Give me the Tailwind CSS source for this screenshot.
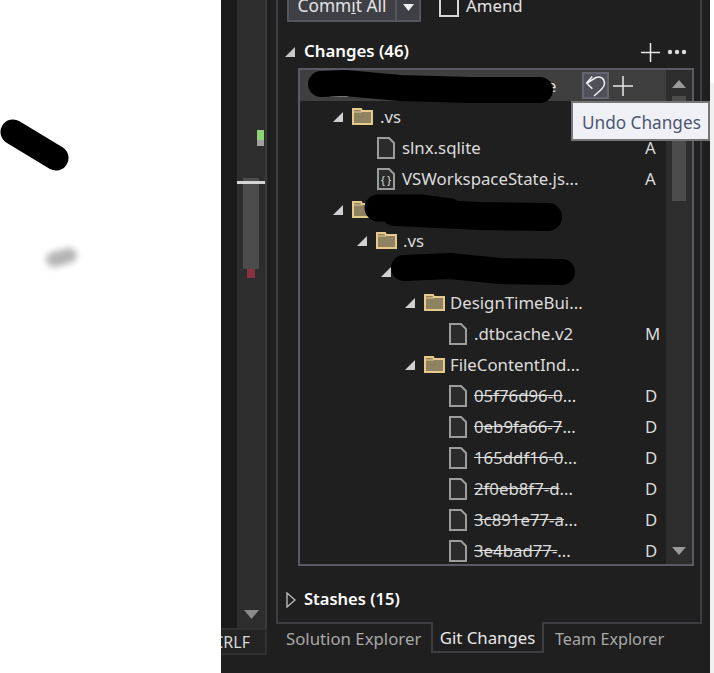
<!DOCTYPE html>
<html lang="en">
<head>
  <meta charset="UTF-8" />
  <title>Git Changes</title>
  <script src="https://cdn.jsdelivr.net/npm/@tailwindcss/browser@4"></script>
</head>
<body class="bg-white font-['Noto_Sans'] text-[16.8px] text-[#dcdcdc]">
  <div class="relative flex w-[714px] h-[673px] overflow-hidden">

    <!-- white area on the left, with the scribbles -->
    <div class="relative w-[221px] shrink-0 bg-white">
      <svg class="absolute left-0 top-0" width="221" height="300"><line x1="13" y1="132" x2="56" y2="158" stroke="#000" stroke-width="25" stroke-linecap="round"/></svg>
      <div class="absolute left-[46px] top-[250px] w-[31px] h-[15px] rounded-full bg-[#b4b4b4] blur-[3px] -rotate-[15deg]"></div>
    </div>

    <!-- editor margin and its scrollbar -->
    <div class="w-[55px] shrink-0 flex flex-col bg-[#1f1f1f]">
      <div class="flex h-[628px]">
        <div class="w-[16px] bg-[#1b1b1b]"></div>
        <div class="relative w-[28px] bg-[#2d2d2d]">
          <div class="absolute left-[20px] top-[130px] w-[7px] h-[10px] bg-[#8fd175]"></div>
          <div class="absolute left-[20px] top-[140px] w-[7px] h-[6px] bg-[#a0a0a0]"></div>
          <div class="absolute left-[6px] top-[178px] w-[16px] h-[91px] bg-[#4c4c4c]"></div>
          <div class="absolute left-0 top-[181px] w-[28px] h-[3px] bg-[#d4d4d4]"></div>
          <div class="absolute left-[10px] top-[269px] w-[8px] h-[9px] bg-[#8a3040]"></div>
          <svg class="absolute left-[7px] top-[610px]" width="15" height="9"><polygon points="0,0 15,0 7.5,9" fill="#8a8a8a"/></svg>
        </div>
        <div class="w-[2px] bg-[#3c3c3c]"></div>
      </div>
      <div class="flex justify-end items-center w-[46px] h-[27px] bg-[#232323] border-y-2 border-r-2 border-[#303030] overflow-hidden text-[16px] text-[#d8d8d8]">
        <span class="shrink-0 pr-[15px]">CRLF</span>
      </div>
    </div>

    <!-- git changes window -->
    <div class="relative w-[434px] shrink-0 bg-[#1f1f1f]">
      <div class="w-[426px] h-[624px] border-x-2 border-b-2 border-[#3e3e42] overflow-hidden">
        <div class="flex items-center -mt-[8px] ml-[9px] h-[30px]">
          <div class="flex h-[30px] border-2 border-[#55555c] bg-[#3f3f46]">
            <div class="w-[108px] flex items-center justify-center border-r-2 border-[#55555c] text-[17.3px] text-[#e4e4e4]"><span class="-mt-[2px]">Comm<u>i</u>t All</span></div>
            <div class="w-[22px] flex items-center justify-center"><svg width="11" height="7"><polygon points="0,0 11,0 5.5,7" fill="#f0f0f0"/></svg></div>
          </div>
          <div class="ml-[18px] -mt-[1px] w-[20px] h-[20px] border-2 border-[#d8d8d8]"></div>
          <div class="ml-[7px] -mt-[2px] text-[#e4e4e4]">Amend</div>
        </div>

        <div class="flex items-center h-[30px] mt-[15px] pl-[7px] relative">
          <svg class="mr-[9px]" width="10" height="10"><polygon points="10,0 10,10 0,10" fill="#c8c8c8"/></svg>
          <span class="-mt-[2px] font-semibold text-white">Changes (46)</span>
          <svg class="ml-auto mr-[7px]" width="19" height="19" viewBox="0 0 19 19"><path d="M9.500 0V19M0 9.500H19" stroke="#e8e8e8" stroke-width="1.5"/></svg>
          <svg class="mr-[13px]" width="20" height="6" viewBox="0 0 20 6"><circle cx="3" cy="3" r="2.2" fill="#dcdcdc"/><circle cx="10" cy="3" r="2.2" fill="#dcdcdc"/><circle cx="17" cy="3" r="2.2" fill="#dcdcdc"/></svg>
        </div>

        <!-- tree -->
        <div class="flex ml-[20px] mt-px w-[396px] h-[498px] border-2 border-[#5a5a64] overflow-hidden">
          <div class="w-[366px] shrink-0">
            <div class="flex items-center h-[31px] bg-[#3f3f3f]">
              <svg class="ml-[30px]" width="18" height="22" viewBox="0 0 18 22"><path d="M1 1H12L17 6V21H1Z" fill="#2b2b2b" stroke="#9c9c9c" stroke-width="2"/></svg>
              <span class="ml-[199px]">e</span>
              <div class="flex items-center justify-center ml-[26px] w-[27px] h-[27px] bg-[#50505a] border-2 border-[#65656f]">
                <svg width="23" height="23" viewBox="0 0 23 23" fill="none" stroke="#f0f0f0" stroke-width="1.5"><path d="M8.300 2.500L2.700 9L8.300 14.700"/><path d="M3 9L12 3.500C16 2 20.500 4 20.500 9.500C20.500 13 17 16 10 22"/></svg>
              </div>
              <svg class="ml-[4px]" width="20" height="20" viewBox="0 0 20 20"><path d="M10 0V20M0 10H20" stroke="#e8e8e8" stroke-width="1.5"/></svg>
            </div>

            <div class="flex items-center h-[31px] pl-[33px]">
              <svg class="mr-[9px]" width="10" height="10"><polygon points="10,0 10,10 0,10" fill="#d0d0d0"/></svg>
              <svg class="mr-[7px]" width="21" height="17" viewBox="0 0 21 17"><path d="M1 1H9L10 3H20V16H1Z" fill="#8f8260" stroke="#e6c98c" stroke-width="2"/><path d="M1 4H10" stroke="#e6c98c"/></svg>
              <span>.vs</span>
            </div>
            <div class="flex items-center h-[31px] pl-[77px]">
              <svg class="mr-[7px]" width="18" height="22" viewBox="0 0 18 22"><path d="M1 1H12L17 6V21H1Z" fill="#2b2b2b" stroke="#9c9c9c" stroke-width="2"/></svg>
              <span>slnx.sqlite</span><span class="ml-auto w-[21px]">A</span>
            </div>
            <div class="flex items-center h-[31px] pl-[77px]">
              <svg class="mr-[7px]" width="18" height="22" viewBox="0 0 18 22"><path d="M1 1H12L17 6V21H1Z" fill="#2b2b2b" stroke="#9c9c9c" stroke-width="2"/><text x="9" y="16" font-size="10" fill="#e0e0e0" text-anchor="middle">{ }</text></svg>
              <span>VSWorkspaceState.js...</span><span class="ml-auto w-[21px]">A</span>
            </div>
            <div class="flex items-center h-[31px] pl-[33px]">
              <svg class="mr-[9px]" width="10" height="10"><polygon points="10,0 10,10 0,10" fill="#d0d0d0"/></svg>
              <svg class="mr-[7px]" width="21" height="17" viewBox="0 0 21 17"><path d="M1 1H9L10 3H20V16H1Z" fill="#8f8260" stroke="#e6c98c" stroke-width="2"/><path d="M1 4H10" stroke="#e6c98c"/></svg>
            </div>
            <div class="flex items-center h-[31px] pl-[57px]">
              <svg class="mr-[9px]" width="10" height="10"><polygon points="10,0 10,10 0,10" fill="#d0d0d0"/></svg>
              <svg class="mr-[6px]" width="21" height="17" viewBox="0 0 21 17"><path d="M1 1H9L10 3H20V16H1Z" fill="#8f8260" stroke="#e6c98c" stroke-width="2"/><path d="M1 4H10" stroke="#e6c98c"/></svg>
              <span>.vs</span>
            </div>
            <div class="flex items-center h-[31px] pl-[81px]">
              <svg width="10" height="10"><polygon points="10,0 10,10 0,10" fill="#d0d0d0"/></svg>
            </div>
            <div class="flex items-center h-[31px] pl-[105px]">
              <svg class="mr-[9px]" width="10" height="10"><polygon points="10,0 10,10 0,10" fill="#d0d0d0"/></svg>
              <svg class="mr-[5px]" width="21" height="17" viewBox="0 0 21 17"><path d="M1 1H9L10 3H20V16H1Z" fill="#8f8260" stroke="#e6c98c" stroke-width="2"/><path d="M1 4H10" stroke="#e6c98c"/></svg>
              <span>DesignTimeBui...</span>
            </div>
            <div class="flex items-center h-[31px] pl-[149px]">
              <svg class="mr-[7px]" width="18" height="22" viewBox="0 0 18 22"><path d="M1 1H12L17 6V21H1Z" fill="#2b2b2b" stroke="#9c9c9c" stroke-width="2"/></svg>
              <span>.dtbcache.v2</span><span class="ml-auto w-[21px]">M</span>
            </div>
            <div class="flex items-center h-[31px] pl-[105px]">
              <svg class="mr-[9px]" width="10" height="10"><polygon points="10,0 10,10 0,10" fill="#d0d0d0"/></svg>
              <svg class="mr-[5px]" width="21" height="17" viewBox="0 0 21 17"><path d="M1 1H9L10 3H20V16H1Z" fill="#8f8260" stroke="#e6c98c" stroke-width="2"/><path d="M1 4H10" stroke="#e6c98c"/></svg>
              <span>FileContentInd...</span>
            </div>
            <div class="flex items-center h-[31px] pl-[149px]">
              <svg class="mr-[7px]" width="18" height="22" viewBox="0 0 18 22"><path d="M1 1H12L17 6V21H1Z" fill="#2b2b2b" stroke="#9c9c9c" stroke-width="2"/></svg>
              <span><span class="line-through">05f76d96-0</span>...</span><span class="ml-auto w-[21px]">D</span>
            </div>
            <div class="flex items-center h-[31px] pl-[149px]">
              <svg class="mr-[7px]" width="18" height="22" viewBox="0 0 18 22"><path d="M1 1H12L17 6V21H1Z" fill="#2b2b2b" stroke="#9c9c9c" stroke-width="2"/></svg>
              <span><span class="line-through">0eb9fa66-7</span>...</span><span class="ml-auto w-[21px]">D</span>
            </div>
            <div class="flex items-center h-[31px] pl-[149px]">
              <svg class="mr-[7px]" width="18" height="22" viewBox="0 0 18 22"><path d="M1 1H12L17 6V21H1Z" fill="#2b2b2b" stroke="#9c9c9c" stroke-width="2"/></svg>
              <span><span class="line-through">165ddf16-0</span>...</span><span class="ml-auto w-[21px]">D</span>
            </div>
            <div class="flex items-center h-[31px] pl-[149px]">
              <svg class="mr-[7px]" width="18" height="22" viewBox="0 0 18 22"><path d="M1 1H12L17 6V21H1Z" fill="#2b2b2b" stroke="#9c9c9c" stroke-width="2"/></svg>
              <span><span class="line-through">2f0eb8f7-d</span>...</span><span class="ml-auto w-[21px]">D</span>
            </div>
            <div class="flex items-center h-[31px] pl-[149px]">
              <svg class="mr-[7px]" width="18" height="22" viewBox="0 0 18 22"><path d="M1 1H12L17 6V21H1Z" fill="#2b2b2b" stroke="#9c9c9c" stroke-width="2"/></svg>
              <span><span class="line-through">3c891e77-a</span>...</span><span class="ml-auto w-[21px]">D</span>
            </div>
            <div class="flex items-center h-[31px] pl-[149px]">
              <svg class="mr-[7px]" width="18" height="22" viewBox="0 0 18 22"><path d="M1 1H12L17 6V21H1Z" fill="#2b2b2b" stroke="#9c9c9c" stroke-width="2"/></svg>
              <span><span class="line-through">3e4bad77-</span>...</span><span class="ml-auto w-[21px]">D</span>
            </div>
          </div>

          <!-- tree scrollbar -->
          <div class="relative w-[26px] bg-[#2d2d2d]">
            <svg class="absolute left-[6px] top-[10px]" width="14" height="8"><polygon points="0,8 14,8 7,0" fill="#9a9a9a"/></svg>
            <div class="absolute left-[6px] top-[26px] w-[14px] h-[105px] bg-[#4c4c4c]"></div>
            <svg class="absolute left-[6px] top-[477px]" width="14" height="8"><polygon points="0,0 14,0 7,8" fill="#9a9a9a"/></svg>
          </div>
        </div>

        <div class="flex items-center h-[30px] mt-[19px] pl-[8px]">
          <svg class="mr-[8px]" width="10" height="16" viewBox="0 0 10 16"><polygon points="1,1 9,8 1,15" fill="none" stroke="#b8b8b8" stroke-width="1.4"/></svg>
          <span class="-mt-[2px] font-semibold text-white text-[16.5px]">Stashes (15)</span>
        </div>
      </div>

      <!-- tabs -->
      <div class="flex h-[31px] -mt-[2px] pl-[10px] text-[#a8a8a8]">
        <div class="flex items-center w-[145px] pt-[3px] whitespace-nowrap">Solution Explorer</div>
        <div class="flex items-center justify-center w-[113px] pt-[3px] bg-[#1f1f1f] border-x-2 border-b-2 border-[#3e3e42] text-[#e8e8e8] whitespace-nowrap">Git Changes</div>
        <div class="flex items-center pl-[11px] pt-[3px] text-[16.2px] whitespace-nowrap">Team Explorer</div>
      </div>
    </div>

    <div class="flex-1 mt-[83px] bg-[#f0f0f0]"></div>

    <!-- redaction marks -->
    <svg class="absolute left-0 top-0 pointer-events-none" width="714" height="300" fill="none" stroke="#000" stroke-linecap="round" stroke-linejoin="round">
      <polyline points="321,84 345,83 400,88 470,90 540,90" stroke-width="26"/>
      <polyline points="378,208 420,208 450,212" stroke-width="27"/>
      <polyline points="395,212 480,216 548,217" stroke-width="28"/>
      <polyline points="404,268 450,266 500,271 562,272" stroke-width="26"/>
    </svg>

    <!-- tooltip -->
    <div class="absolute left-[571px] top-[101px] flex items-center w-[139px] h-[40px] pl-[9px] pt-[3px] bg-[#f0f0f7] border-2 border-[#767676] text-[17.2px] text-[#4a5670] whitespace-nowrap">Undo Changes</div>
  </div>
</body>
</html>
